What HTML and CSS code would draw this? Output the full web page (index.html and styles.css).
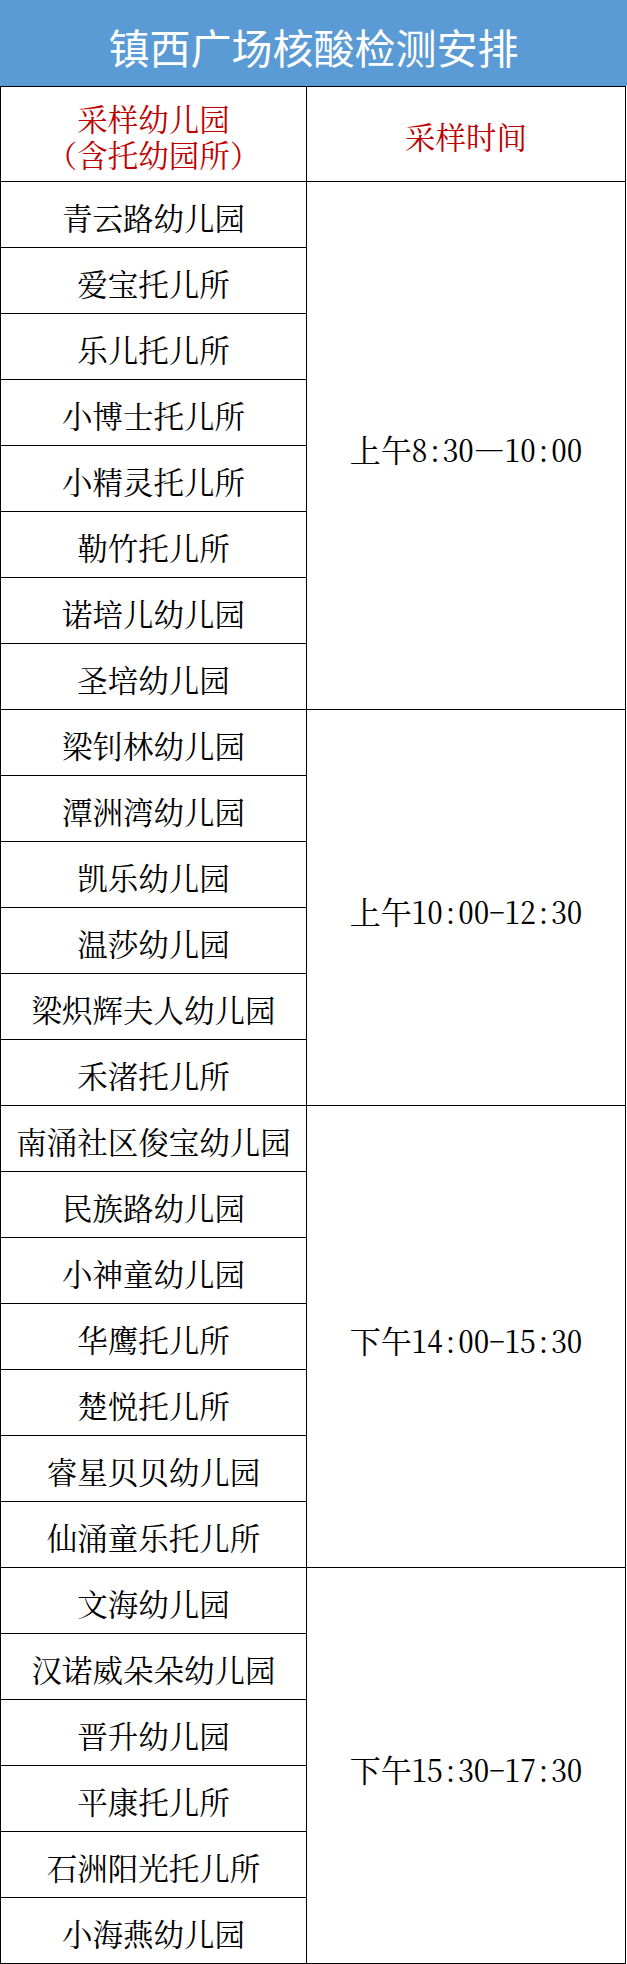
FILE: index.html
```html
<!DOCTYPE html>
<html lang="zh-CN">
<head>
<meta charset="utf-8">
<title>镇西广场核酸检测安排</title>
<link rel="stylesheet" href="styles.css">
</head>
<body>
<header class="banner"><h1 class="banner-title">镇西广场核酸检测安排</h1></header>
<div class="schedule">
  <div class="cell head"><p class="head-text">采样幼儿园<br>（含托幼园所）</p></div>
  <div class="cell head time-head">采样时间</div>

  <div class="cell name">青云路幼儿园</div>
  <div class="cell time span8">上午8:30—10:00</div>
  <div class="cell name">爱宝托儿所</div>
  <div class="cell name">乐儿托儿所</div>
  <div class="cell name">小博士托儿所</div>
  <div class="cell name">小精灵托儿所</div>
  <div class="cell name">勒竹托儿所</div>
  <div class="cell name">诺培儿幼儿园</div>
  <div class="cell name">圣培幼儿园</div>

  <div class="cell name">梁钊林幼儿园</div>
  <div class="cell time span6">上午10:00-12:30</div>
  <div class="cell name">潭洲湾幼儿园</div>
  <div class="cell name">凯乐幼儿园</div>
  <div class="cell name">温莎幼儿园</div>
  <div class="cell name">梁炽辉夫人幼儿园</div>
  <div class="cell name">禾渚托儿所</div>

  <div class="cell name">南涌社区俊宝幼儿园</div>
  <div class="cell time span7">下午14:00-15:30</div>
  <div class="cell name">民族路幼儿园</div>
  <div class="cell name">小神童幼儿园</div>
  <div class="cell name">华鹰托儿所</div>
  <div class="cell name">楚悦托儿所</div>
  <div class="cell name">睿星贝贝幼儿园</div>
  <div class="cell name">仙涌童乐托儿所</div>

  <div class="cell name">文海幼儿园</div>
  <div class="cell time span6">下午15:30-17:30</div>
  <div class="cell name">汉诺威朵朵幼儿园</div>
  <div class="cell name">晋升幼儿园</div>
  <div class="cell name">平康托儿所</div>
  <div class="cell name">石洲阳光托儿所</div>
  <div class="cell name">小海燕幼儿园</div>
</div>
</body>
</html>
```

FILE: styles.css
```css
* { box-sizing: border-box; }

html, body {
  margin: 0;
  padding: 0;
  background: #ffffff;
}

body {
  width: 627px;
  font-family: "Noto Serif CJK SC", "Noto Sans CJK SC", serif;
  color: #000000;
}

.banner {
  height: 86px;
  background: #5b9bd5;
  display: flex;
  align-items: center;
  justify-content: center;
}

.banner-title {
  margin: 0;
  padding-top: 6px;
  font-family: "Noto Sans CJK SC", sans-serif;
  font-weight: 400;
  font-size: 41px;
  line-height: 1;
  color: #ffffff;
}

.schedule {
  width: 626px;
  display: grid;
  grid-template-columns: 306px 319px;
  grid-template-rows: 95px repeat(27, 66px);
  border-left: 1px solid #000000;
  border-top: 1px solid #000000;
}

.cell {
  border-right: 1px solid #000000;
  border-bottom: 1px solid #000000;
  display: flex;
  flex-direction: column;
  align-items: center;
  justify-content: center;
  font-size: 30.5px;
  line-height: 1;
  padding-top: 5px;
  white-space: nowrap;
}

.head {
  color: #c00000;
  padding-top: 4px;
}

.head-text {
  margin: 0;
  text-align: center;
  line-height: 36px;
}

.time {
  grid-column: 2;
  font-size: 31px;
  font-feature-settings: "hwid" 1;
}

.span8 { grid-row: span 8; }
.span7 { grid-row: span 7; }
.span6 { grid-row: span 6; }
```
